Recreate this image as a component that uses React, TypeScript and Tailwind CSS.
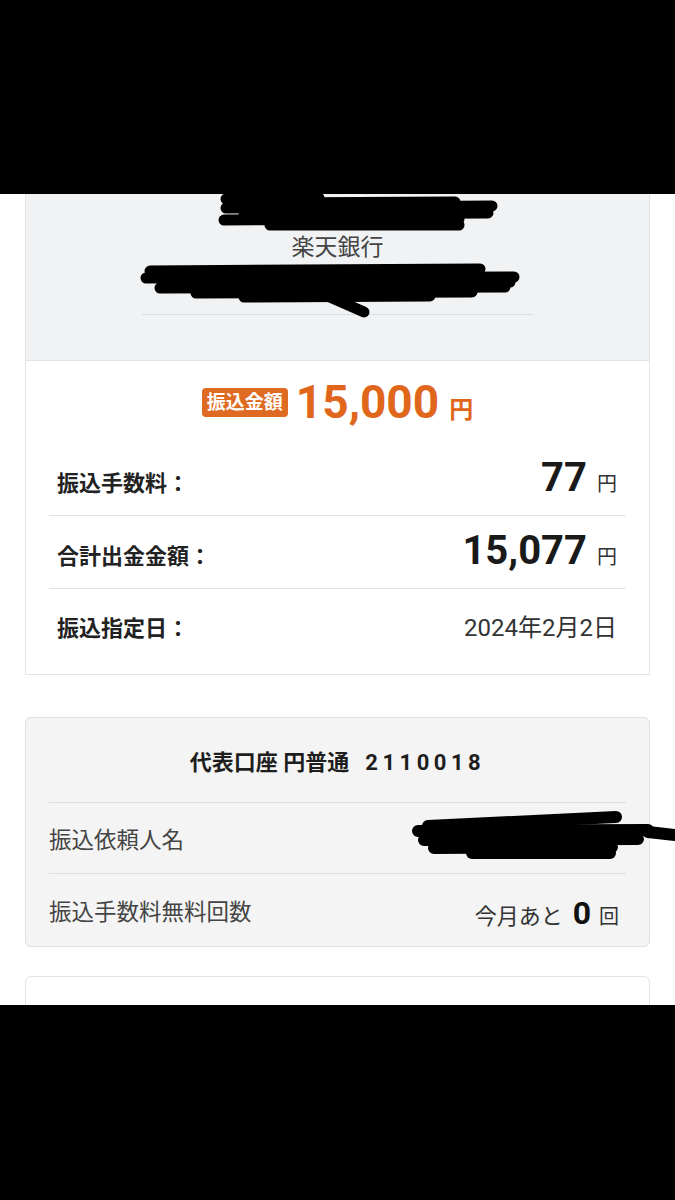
import React from "react";

const font = "font-['Roboto','Noto_Sans_CJK_JP',sans-serif]";

function Scribbles() {
  // redaction marks drawn over the page
  return (
    <svg
      className="absolute left-0 top-0 pointer-events-none"
      width="675"
      height="811"
      viewBox="0 0 675 811"
    >
      <g stroke="#000" strokeLinecap="round" strokeLinejoin="round" fill="none">
        <g strokeWidth="11">
          <path d="M226 5 L319 4" />
          <path d="M262 9 L455 8" />
          <path d="M226 14 L492 12" />
          <path d="M244 20 L488 19" />
          <path d="M224 26 L459 25" />
          <path d="M270 31 L459 31" />
        </g>
        <g strokeWidth="11">
          <path d="M150 77 L480 75" />
          <path d="M146 84 L514 83" />
          <path d="M176 89 L510 88" />
          <path d="M160 94 L505 93" />
          <path d="M196 99 L472 98" />
          <path d="M244 103 L430 102" />
          <path d="M323 100 L364 118" />
        </g>
        <g strokeWidth="12">
          <path d="M428 632 L616 623" />
          <path d="M418 637 L648 636" />
          <path d="M648 638 L675 641" />
          <path d="M424 646 L638 645" />
          <path d="M434 654 L612 653" />
          <path d="M472 659 L610 659" />
        </g>
      </g>
    </svg>
  );
}

function FeeRow({ label, value, last }: { label: string; value: string; last?: boolean }) {
  return (
    <div
      className={`flex items-baseline justify-between pl-[8px] pr-[9px] pt-[15px] pb-[17px] ${
        last ? "" : "border-b border-[#e2e2e2]"
      }`}
    >
      <span className="text-[22px] leading-[28px] font-bold text-[#222]">{label}</span>
      <span className="flex items-baseline">
        <span className="text-[40px] leading-[40px] font-bold text-[#1a1a1a]">{value}</span>
        <span className="ml-[10px] text-[20px] leading-[28px] text-[#333]">円</span>
      </span>
    </div>
  );
}

export default function App() {
  return (
    <div className={`w-[675px] h-[1200px] flex flex-col bg-white overflow-hidden ${font}`}>
      <div className="h-[194px] shrink-0 bg-black" />

      <div className="relative h-[811px] shrink-0 overflow-hidden bg-white">
        {/* bank summary card */}
        <div className="mx-[25px] border-x border-b border-[#e4e4e4]">
          <div className="h-[167px] bg-[#f1f2f4] border-b border-[#e4e4e4] pt-[40px]">
            <div className="text-center text-[23px] leading-[28px] text-[#444]">楽天銀行</div>
            <div className="mt-[52px] mx-[116px] h-px bg-[#dcdde0]" />
          </div>

          <div className="bg-white">
            <div className="h-[82px] flex items-center justify-center">
              <span className="h-[29px] px-[5px] rounded-[4px] bg-[#df6a21] text-white text-[19px] leading-[29px] font-bold">
                振込金額
              </span>
              <span className="ml-[8px] flex items-baseline text-[#e0661c]">
                <span className="text-[46px] leading-[50px] font-bold">15,000</span>
                <span className="ml-[10px] text-[24px] font-bold">円</span>
              </span>
            </div>

            <div className="mx-[23px]">
              <FeeRow label="振込手数料：" value="77" />
              <FeeRow label="合計出金金額：" value="15,077" />
              <div className="h-[85px] flex items-baseline justify-between pl-[8px] pr-[9px] pt-[25px]">
                <span className="text-[22px] leading-[28px] font-bold text-[#222]">振込指定日：</span>
                <span className="text-[24px] leading-[28px] text-[#333]">2024年2月2日</span>
              </div>
            </div>
          </div>
        </div>

        {/* account card */}
        <div className="mx-[25px] mt-[42px] rounded-[6px] border border-[#e0e0e0] bg-[#f4f4f4]">
          <div className="px-[23px]">
            <div className="h-[85px] pt-[4px] flex items-center justify-center border-b border-[#dedede] text-[22px] font-bold text-[#1e1e1e]">
              <span>代表口座 円普通</span>
              <span className="ml-[16px] tracking-[4.5px]">2110018</span>
            </div>
            <div className="h-[71px] pt-[6px] flex items-center border-b border-[#dedede]">
              <span className="text-[22.5px] text-[#444]">振込依頼人名</span>
            </div>
            <div className="h-[72px] pt-[6px] flex items-center justify-between">
              <span className="text-[22.5px] text-[#444]">振込手数料無料回数</span>
              <span className="flex items-baseline pr-[7px] text-[#333]">
                <span className="text-[22px]">今月あと</span>
                <span className="ml-[10px] text-[32px] font-bold text-[#111]">0</span>
                <span className="ml-[8px] text-[20px]">回</span>
              </span>
            </div>
          </div>
        </div>

        {/* next card, cut off */}
        <div className="mx-[25px] mt-[29px] h-[60px] rounded-[6px] border border-[#e4e4e4] bg-white" />

        <Scribbles />
      </div>

      <div className="flex-1 bg-black" />
    </div>
  );
}
